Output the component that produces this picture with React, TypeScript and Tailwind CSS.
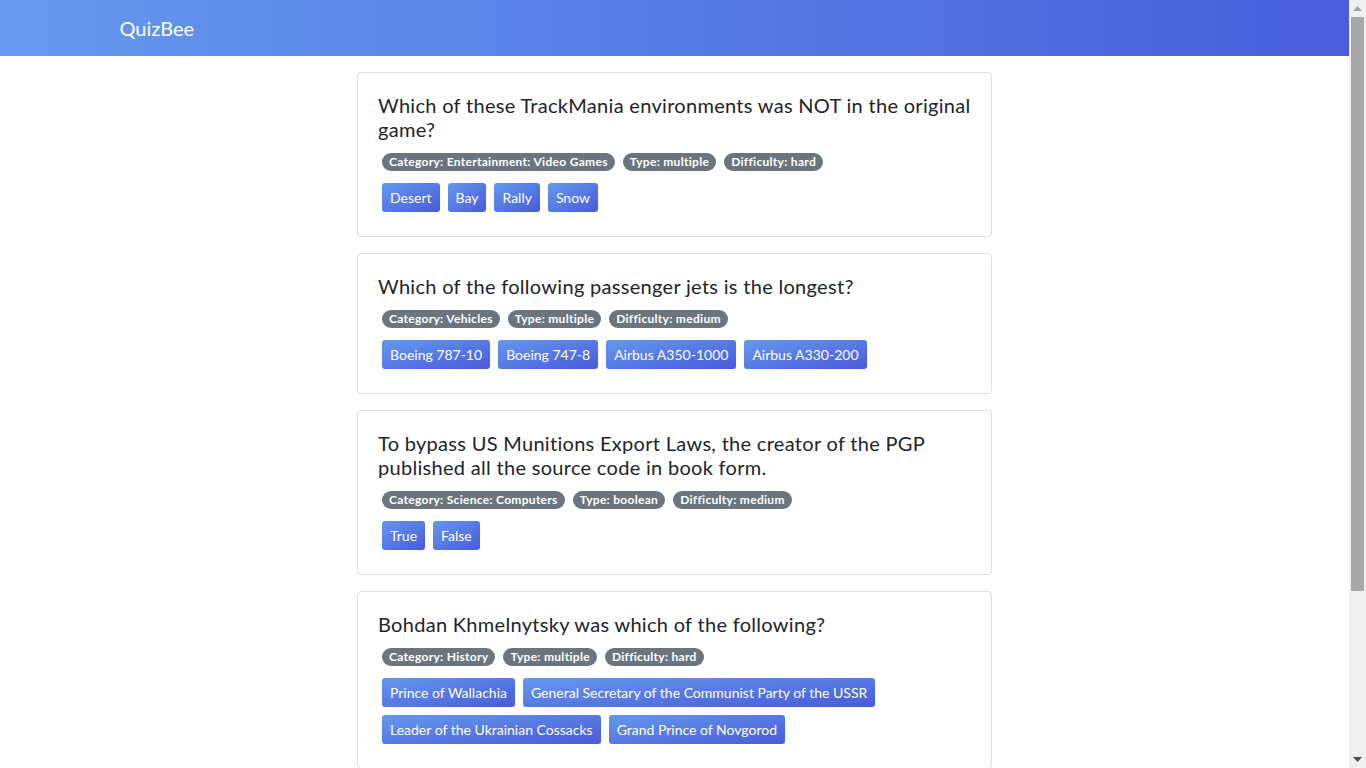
import React from "react";

type Question = {
  question: string;
  category: string;
  type: string;
  difficulty: string;
  answers: string[];
};

const questions: Question[] = [
  {
    question: "Which of these TrackMania environments was NOT in the original game?",
    category: "Entertainment: Video Games",
    type: "multiple",
    difficulty: "hard",
    answers: ["Desert", "Bay", "Rally", "Snow"],
  },
  {
    question: "Which of the following passenger jets is the longest?",
    category: "Vehicles",
    type: "multiple",
    difficulty: "medium",
    answers: ["Boeing 787-10", "Boeing 747-8", "Airbus A350-1000", "Airbus A330-200"],
  },
  {
    question:
      "To bypass US Munitions Export Laws, the creator of the PGP published all the source code in book form.",
    category: "Science: Computers",
    type: "boolean",
    difficulty: "medium",
    answers: ["True", "False"],
  },
  {
    question: "Bohdan Khmelnytsky was which of the following?",
    category: "History",
    type: "multiple",
    difficulty: "hard",
    answers: [
      "Prince of Wallachia",
      "General Secretary of the Communist Party of the USSR",
      "Leader of the Ukrainian Cossacks",
      "Grand Prince of Novgorod",
    ],
  },
  {
    question: "In the game \"Overwatch\", which hero has the ability to build a teleporter?",
    category: "Entertainment: Video Games",
    type: "multiple",
    difficulty: "easy",
    answers: ["Symmetra", "Torbjörn", "Lúcio", "Mercy"],
  },
];

function Badge({ children }: { children: React.ReactNode }) {
  return (
    <span className="mx-1 inline-block rounded-full bg-[#6c757d] px-[7px] py-[3px] text-[12px] font-bold leading-3 tracking-[0.3px] text-white">
      {children}
    </span>
  );
}

function QuestionCard({ q }: { q: Question }) {
  return (
    <div className="mb-4 rounded border border-[#dfdfdf] bg-white p-5">
      <h5 className="mb-3 text-[20px] leading-6 tracking-[0.3px] text-[#212529]">{q.question}</h5>
      <div className="mb-2 flex flex-wrap">
        <Badge>Category: {q.category}</Badge>
        <Badge>Type: {q.type}</Badge>
        <Badge>Difficulty: {q.difficulty}</Badge>
      </div>
      <div className="flex flex-wrap">
        {q.answers.map((a) => (
          <button
            key={a}
            className="m-1 rounded-[3px] bg-linear-to-br from-[#6598ee] to-[#4a5ad9] px-2 py-1 text-[14px] leading-[21px] text-white"
          >
            {a}
          </button>
        ))}
      </div>
    </div>
  );
}

// classic window scrollbar, as seen in the screenshot
function Scrollbar() {
  return (
    <div className="flex h-screen w-[17px] shrink-0 flex-col items-center bg-[#f1f1f1]">
      <div className="flex h-[17px] items-center justify-center">
        <svg width="9" height="5" viewBox="0 0 9 5">
          <path d="M0 5 L4.5 0 L9 5 Z" fill="#a3a3a3" />
        </svg>
      </div>
      <div className="h-[574px] w-[13px] bg-[#a8a8a8]" />
      <div className="flex-1" />
      <div className="flex h-[17px] items-center justify-center">
        <svg width="9" height="5" viewBox="0 0 9 5">
          <path d="M0 0 L9 0 L4.5 5 Z" fill="#505050" />
        </svg>
      </div>
    </div>
  );
}

export default function App() {
  return (
    <div className="flex h-screen overflow-hidden bg-white font-['Lato',sans-serif]">
      <div className="h-screen flex-1 overflow-hidden">
        <nav className="bg-linear-to-r from-[#6599ee] to-[#4a5ddb]">
          <div className="mx-auto flex h-14 w-[1140px] items-center px-[15px]">
            <span className="text-[20px] text-white">QuizBee</span>
          </div>
        </nav>
        <main className="mx-auto w-[635px] pt-4 pb-1">
          {questions.map((q, i) => (
            <QuestionCard key={i} q={q} />
          ))}
        </main>
      </div>
      <Scrollbar />
    </div>
  );
}
